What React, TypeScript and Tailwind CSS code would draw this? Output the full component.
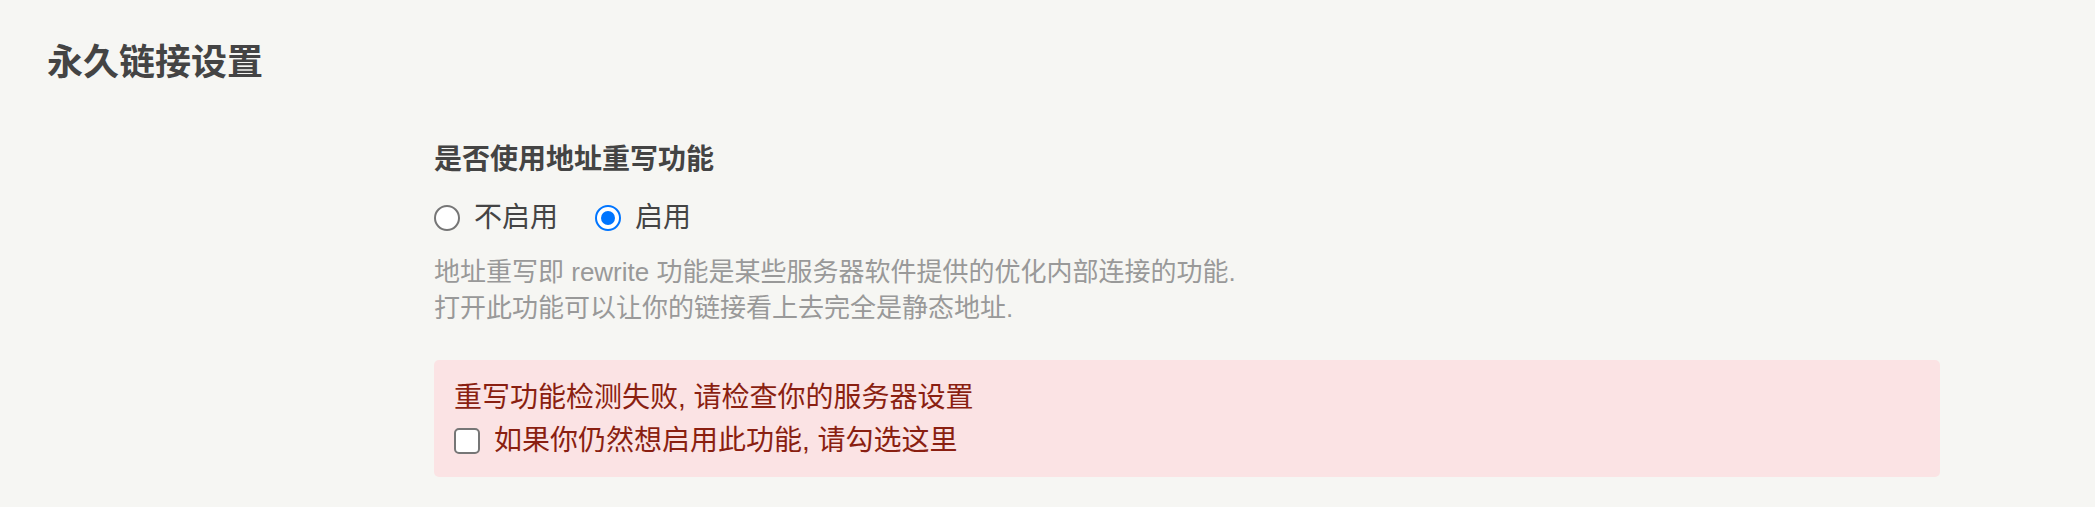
import type { ReactNode } from "react";

function Radio({ checked, children }: { checked?: boolean; children: ReactNode }) {
  return (
    <label className="flex items-center gap-[14px]">
      {checked ? (
        <span className="w-[26px] h-[26px] rounded-full border-2 border-[#0075ff] bg-white flex items-center justify-center">
          <span className="w-[14px] h-[14px] rounded-full bg-[#0075ff]" />
        </span>
      ) : (
        <span className="w-[26px] h-[26px] rounded-full border-2 border-[#767676] bg-white" />
      )}
      <span>{children}</span>
    </label>
  );
}

export default function App() {
  return (
    <div className="min-h-screen bg-[#f6f6f3] text-[#444] font-[family-name:'Liberation_Sans','Noto_Sans_CJK_SC',sans-serif] px-[47px] pt-[41px]">
      <h2 className="text-[36px] leading-[44px] font-bold">永久链接设置</h2>

      <div className="grid grid-cols-[387px_1fr] pr-[108px] pt-[54px]">
        <div />
        <div>
          {/* Rewrite option */}
          <div className="text-[28px] leading-[42px] font-bold">是否使用地址重写功能</div>
          <div className="flex items-center gap-[37px] text-[28px] leading-[42px] mt-[16px]">
            <Radio>不启用</Radio>
            <Radio checked>启用</Radio>
          </div>
          <p className="text-[26px] leading-[36px] text-[#999] mt-[15px]">
            地址重写即 rewrite 功能是某些服务器软件提供的优化内部连接的功能.
            <br />
            打开此功能可以让你的链接看上去完全是静态地址.
          </p>

          {/* Error message */}
          <div className="mt-[34px] rounded-[5px] bg-[#fbe3e4] text-[#8a1f11] text-[28px] leading-[43px] px-[20px] pt-[16px] pb-[15px]">
            <div>重写功能检测失败, 请检查你的服务器设置</div>
            <label className="flex items-center gap-[14px]">
              <span className="w-[26px] h-[26px] rounded-[5px] border-2 border-[#767676] bg-white" />
              <span>如果你仍然想启用此功能, 请勾选这里</span>
            </label>
          </div>
        </div>
      </div>
    </div>
  );
}
